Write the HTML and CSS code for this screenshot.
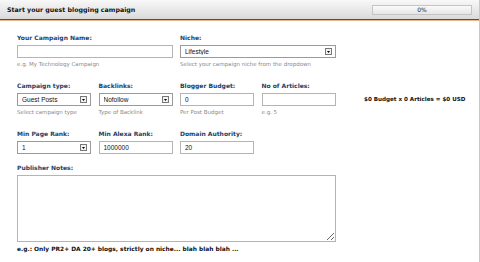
FILE: index.html
```html
<!DOCTYPE html>
<html lang="en">
<head>
    <meta charset="UTF-8">
    <meta name="viewport" content="width=device-width, initial-scale=1.0">
    <title>Guest Blogging Campaign</title>
    <link rel="stylesheet" href="styles.css">
</head>
<body>

    <div class="panel">
        <div class="panel-header">
            <h1>Start your guest blogging campaign</h1>
            <div class="progress"><span>0%</span></div>
        </div>

        <form class="campaign-form">
            <div class="form-row row-wide">
                <div class="field span-2">
                    <label for="campaignName">Your Campaign Name:</label>
                    <input type="text" id="campaignName">
                    <p class="hint">e.g. My Technology Campaign</p>
                </div>
                <div class="field span-2">
                    <label for="niche">Niche:</label>
                    <select id="niche">
                        <option>Lifestyle</option>
                    </select>
                    <p class="hint">Select your campaign niche from the dropdown</p>
                </div>
            </div>

            <div class="form-row">
                <div class="field">
                    <label for="campaignType">Campaign type:</label>
                    <select id="campaignType">
                        <option>Guest Posts</option>
                    </select>
                    <p class="hint">Select campaign type</p>
                </div>
                <div class="field">
                    <label for="backlinks">Backlinks:</label>
                    <select id="backlinks">
                        <option>Nofollow</option>
                    </select>
                    <p class="hint">Type of Backlink</p>
                </div>
                <div class="field">
                    <label for="budget">Blogger Budget:</label>
                    <input type="text" id="budget" value="0">
                    <p class="hint">Per Post Budget</p>
                </div>
                <div class="field">
                    <label for="articles">No of Articles:</label>
                    <input type="text" id="articles">
                    <p class="hint">e.g. 5</p>
                </div>
                <div class="total">$0 Budget x 0 Articles = $0 USD</div>
            </div>

            <div class="form-row">
                <div class="field">
                    <label for="pageRank">Min Page Rank:</label>
                    <select id="pageRank">
                        <option>1</option>
                    </select>
                </div>
                <div class="field">
                    <label for="alexaRank">Min Alexa Rank:</label>
                    <input type="text" id="alexaRank" value="1000000">
                </div>
                <div class="field">
                    <label for="domainAuthority">Domain Authority:</label>
                    <input type="text" id="domainAuthority" value="20">
                </div>
            </div>

            <div class="field notes">
                <label for="notes">Publisher Notes:</label>
                <textarea id="notes"></textarea>
                <p class="notes-hint">e.g.: Only PR2+ DA 20+ blogs, strictly on niche... blah blah blah ...</p>
            </div>
        </form>
    </div>

</body>
</html>
```

FILE: styles.css
```css
body {
    margin: 0;
    background: #ffffff;
    font-family: "DejaVu Sans", Verdana, sans-serif;
}
.panel {
    height: 262px;
    border-right: 1px solid #c8c8c8;
    box-sizing: border-box;
}
.panel-header {
    height: 19px;
    display: flex;
    align-items: center;
    justify-content: space-between;
    padding: 0 7px;
    background: linear-gradient(#f8f8f8, #dadada);
    border-bottom: 1px solid #8e3d0c;
    box-shadow: 0 1px 0 #e8b58a;
}
.panel-header h1 {
    margin: 0;
    font-size: 6.3px;
    font-weight: bold;
    color: #111;
}
.progress {
    width: 98px;
    height: 8px;
    border: 1px solid #c4c4c4;
    background: linear-gradient(#fafafa, #e6e6e6);
    display: flex;
    align-items: center;
    justify-content: center;
    font-size: 6px;
    color: #222;
}
.campaign-form {
    padding: 13px 0 0 17px;
}
.form-row {
    display: grid;
    grid-template-columns: repeat(4, 74px) auto;
    column-gap: 7.5px;
    margin-bottom: 13px;
}
.span-2 {
    grid-column: span 2;
}
.field label {
    display: block;
    font-size: 6px;
    line-height: 9px;
    font-weight: bold;
    color: #1d3e63;
    margin-bottom: 3px;
}
.field input, .field select {
    display: block;
    width: 100%;
    height: 13px;
    box-sizing: border-box;
    margin: 0;
    padding: 0 4px;
    border: 1px solid #b4b4b4;
    background: #fff;
    font-family: "Liberation Sans", Arial, sans-serif;
    font-size: 6.5px;
    color: #111;
    outline: none;
}
.field select {
    appearance: none;
    -webkit-appearance: none;
    border-radius: 0;
    border-color: #9a9a9a;
    background: #fff url("data:image/svg+xml;utf8,<svg xmlns='http://www.w3.org/2000/svg' width='7' height='7'><rect x='0.5' y='0.5' width='6' height='6' fill='%23f2f2f2' stroke='%23777'/><path d='M2 3h3l-1.5 2z' fill='%23000'/></svg>") no-repeat right 3px center;
}
.hint {
    margin: 2px 0 0;
    font-size: 5.5px;
    line-height: 8px;
    color: #8a8a8a;
}
.total {
    align-self: start;
    margin: 15px 0 0 21px;
    font-size: 5.6px;
    font-weight: bold;
    color: #111;
    white-space: nowrap;
}
.notes {
    width: 319px;
    margin-top: -4px;
}
.notes textarea {
    display: block;
    width: 100%;
    height: 67px;
    box-sizing: border-box;
    margin: 0;
    border: 1px solid #b4b4b4;
    resize: both;
}
.notes-hint {
    margin: 3px 0 0;
    font-size: 5.9px;
    line-height: 8px;
    font-weight: bold;
    color: #111;
}
```
